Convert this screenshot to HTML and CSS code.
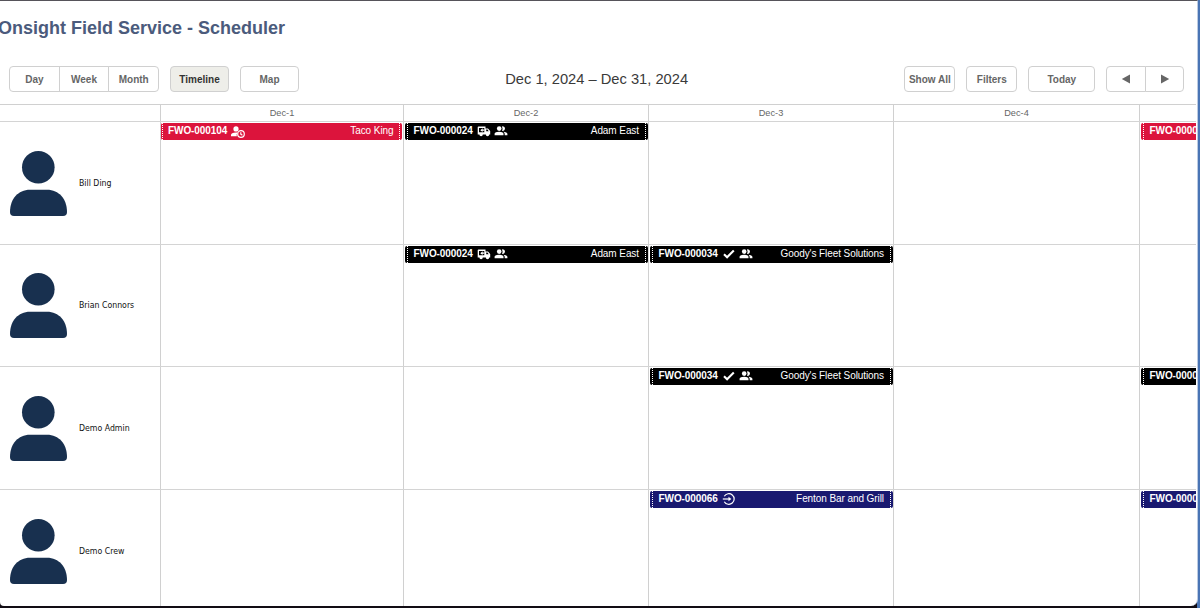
FILE: index.html
```html
<!DOCTYPE html>
<html lang="en">
<head>
  <meta charset="utf-8">
  <title>Onsight Field Service - Scheduler</title>
  <link rel="stylesheet" href="styles.css">
</head>
<body>
  <svg class="defs" aria-hidden="true">
    <symbol id="avatar" viewBox="0 0 57 65">
      <circle cx="28.3" cy="16.3" r="16.3"/>
      <path d="M0 61C0 48 8 38.7 20 38.7H37C49 38.7 57 48 57 61Q57 65 53 65H4Q0 65 0 61Z"/>
    </symbol>
    <symbol id="user-clock" viewBox="0 0 14 12">
      <circle cx="5" cy="2.9" r="2.6"/>
      <path d="M0 10.3V9Q0 6.5 5 6.4Q6 6.4 6.6 6.6Q5.2 8.4 5.8 10.3Z"/>
      <circle cx="10" cy="8" r="3.3" class="line"/>
      <path d="M9.8 6.2V8.2L11.4 9.3" class="line"/>
    </symbol>
    <symbol id="truck" viewBox="0 0 14 12">
      <path fill-rule="evenodd" d="M1.5 1.5H8.5V3.5H11L13.2 6V9.5H12.2A1.7 1.7 0 0 1 8.8 9.5H5.8A1.7 1.7 0 0 1 2.4 9.5H.7V2.3Q.7 1.5 1.5 1.5ZM2 3V7.3H7.3V3ZM9.2 4.5V6.3H11.7L10.5 4.5Z"/>
      <path d="M5.6 3.3V4.6H7.4V5.8H5.6V7L3.3 5.2Z"/>
    </symbol>
    <symbol id="users" viewBox="0 0 14 12">
      <circle cx="5.2" cy="3.6" r="2.3"/>
      <path d="M8 1.4A2.3 2.3 0 1 1 8 5.8Q9.1 3.6 8 1.4Z"/>
      <path d="M.6 10.3V8.8Q.8 6.8 5.2 6.7Q9.2 6.8 9.5 8.8V10.3Z"/>
      <path d="M9.3 6.8Q13 7.1 13.4 8.8V10.3H10.7V8.8Q10.6 7.6 9.3 6.8Z"/>
    </symbol>
    <symbol id="check" viewBox="0 0 14 12">
      <path d="M2 6.2L5.1 9.2L11.8 2.5" class="line thick"/>
    </symbol>
    <symbol id="arrival" viewBox="0 0 14 12">
      <path d="M2.3 3.3A5.3 5.3 0 1 1 2.3 8.7" class="line"/>
      <path d="M.8 6H7.5" class="line"/>
      <path d="M6.5 3.8L9.3 6L6.5 8.2Z"/>
    </symbol>
  </svg>

  <div class="window">
    <h1>Onsight Field Service - Scheduler</h1>

    <div class="toolbar">
      <div class="views">
        <div class="group">
          <button>Day</button><button>Week</button><button>Month</button>
        </div>
        <button class="btn active">Timeline</button>
        <button class="btn">Map</button>
      </div>
      <div class="range">Dec 1, 2024 – Dec 31, 2024</div>
      <div class="actions">
        <button class="btn show">Show All</button>
        <button class="btn filters">Filters</button>
        <button class="btn today">Today</button>
        <div class="group arrows">
          <button><svg viewBox="0 0 10 10"><path d="M9 .5V9.5L.8 5Z"/></svg></button><button><svg viewBox="0 0 10 10"><path d="M1 .5V9.5L9.2 5Z"/></svg></button>
        </div>
      </div>
    </div>

    <div class="timeline">
      <div class="row head">
        <div></div><div>Dec-1</div><div>Dec-2</div><div>Dec-3</div><div>Dec-4</div><div></div>
      </div>

      <div class="row">
        <div class="person"><svg><use href="#avatar"/></svg>Bill Ding</div>
        <div class="first"><div class="event red"><b>FWO-000104</b><svg><use href="#user-clock"/></svg><span>Taco King</span></div></div>
        <div><div class="event black"><b>FWO-000024</b><svg><use href="#truck"/></svg><svg><use href="#users"/></svg><span>Adam East</span></div></div>
        <div></div>
        <div></div>
        <div><div class="event red"><b>FWO-0000</b></div></div>
      </div>

      <div class="row">
        <div class="person"><svg><use href="#avatar"/></svg>Brian Connors</div>
        <div></div>
        <div><div class="event black"><b>FWO-000024</b><svg><use href="#truck"/></svg><svg><use href="#users"/></svg><span>Adam East</span></div></div>
        <div><div class="event black"><b>FWO-000034</b><svg><use href="#check"/></svg><svg><use href="#users"/></svg><span>Goody's Fleet Solutions</span></div></div>
        <div></div>
        <div></div>
      </div>

      <div class="row">
        <div class="person"><svg><use href="#avatar"/></svg>Demo Admin</div>
        <div></div>
        <div></div>
        <div><div class="event black"><b>FWO-000034</b><svg><use href="#check"/></svg><svg><use href="#users"/></svg><span>Goody's Fleet Solutions</span></div></div>
        <div></div>
        <div><div class="event black"><b>FWO-0000</b></div></div>
      </div>

      <div class="row">
        <div class="person"><svg><use href="#avatar"/></svg>Demo Crew</div>
        <div></div>
        <div></div>
        <div><div class="event navy"><b>FWO-000066</b><svg><use href="#arrival"/></svg><span>Fenton Bar and Grill</span></div></div>
        <div></div>
        <div><div class="event navy"><b>FWO-0000</b></div></div>
      </div>
    </div>
  </div>
</body>
</html>
```
FILE: styles.css
```css
* {
  box-sizing: border-box;
}

body {
  margin: 0;
  height: 608px;
  overflow: hidden;
  background: linear-gradient(to right, #120d14 1197px, #4a75b5 1197px);
  font-family: "Liberation Sans", Arial, sans-serif;
}

.defs {
  display: none;
}

.window {
  width: 1198px;
  height: 606px;
  overflow: hidden;
  background: #fff;
  border-top: 1px solid #56545a;
  border-right: 1px solid #bccbe2;
  border-radius: 0 0 7px 4px;
}

h1 {
  margin: 0 0 0 -2px;
  height: 65px;
  padding-top: 16px;
  font-size: 18px;
  line-height: 22px;
  color: #4b5b7c;
}

.toolbar {
  display: flex;
  justify-content: space-between;
  height: 38px;
  padding: 0 12.7px 0 9px;
}

.views, .actions {
  display: flex;
  gap: 11px;
  width: 290px;
}

.actions {
  gap: 11px;
  justify-content: flex-end;
}

button {
  height: 26px;
  padding: 0;
  border: 1px solid #d0d0d0;
  background: #fff;
  font: bold 10px "Liberation Sans", Arial, sans-serif;
  color: #666;
}

.btn {
  width: 59px;
  border-radius: 4px;
}

.btn.active {
  background: #eeeee9;
  color: #333;
}

.btn.show, .btn.filters {
  width: 51px;
}

.btn.today {
  width: 67px;
}

.group {
  display: flex;
}

.group button {
  width: 50.7px;
}

.group button + button {
  margin-left: -1px;
}

.group button:first-child {
  border-radius: 4px 0 0 4px;
}

.group button:last-child {
  border-radius: 0 4px 4px 0;
}

.arrows button {
  width: 39.5px;
}

.arrows svg {
  display: block;
  width: 10px;
  height: 10px;
  margin: 0 auto;
  fill: #666;
}

.range {
  font-size: 14.7px;
  line-height: 26px;
  color: #3a3a3a;
}

.timeline {
  width: 1196px;
  overflow: hidden;
}

.row {
  display: grid;
  grid-template-columns: 161px 243px 245px 245px 246px 245px;
  height: 122.6px;
  border-bottom: 1px solid #d4d4d4;
}

.row > div {
  border-right: 1px solid #d0d0d0;
}

.row.head {
  height: 18px;
  border-top: 1px solid #d0d0d0;
  font-size: 9.2px;
  line-height: 16px;
  text-align: center;
  color: #666;
}

.person {
  display: flex;
  align-items: center;
  gap: 12px;
  padding-left: 10px;
  font: 8.7px "DejaVu Sans Condensed", Tahoma, sans-serif;
  color: #111;
}

.person svg {
  width: 57px;
  height: 65px;
  margin-top: 1px;
  fill: #18304f;
}

.event {
  display: flex;
  align-items: center;
  width: 243px;
  height: 17px;
  margin: 1px 0 0 1px;
  padding: 0 9px 1.6px 8.5px;
  border-radius: 2px;
  font-size: 10px;
  letter-spacing: -0.08px;
  white-space: nowrap;
  color: #fff;
  /* dotted resize grips on both ends */
  background-image: linear-gradient(#fff 1px, transparent 1px), linear-gradient(#fff 1px, transparent 1px);
  background-size: 1px 2px;
  background-repeat: repeat-y;
  background-position: 2px 0, 240px 0;
}

.first .event {
  width: 241px;
  margin-left: 0;
  padding-left: 7px;
  padding-right: 8.5px;
  background-position: 1px 0, 238px 0;
}

.event svg {
  width: 14px;
  height: 12px;
  margin: 1px 0 0 3px;
  fill: #fff;
}

.event b + svg {
  margin-left: 4px;
}

.first .event svg {
  margin-top: 2px;
}

.event span {
  margin-left: auto;
}

.red {
  background-color: #dc143c;
}

.black {
  background-color: #000;
}

.navy {
  background-color: #191970;
}

.line {
  fill: none;
  stroke: #fff;
  stroke-width: 1.2px;
}

.line.thick {
  stroke-width: 2.1px;
}
```
